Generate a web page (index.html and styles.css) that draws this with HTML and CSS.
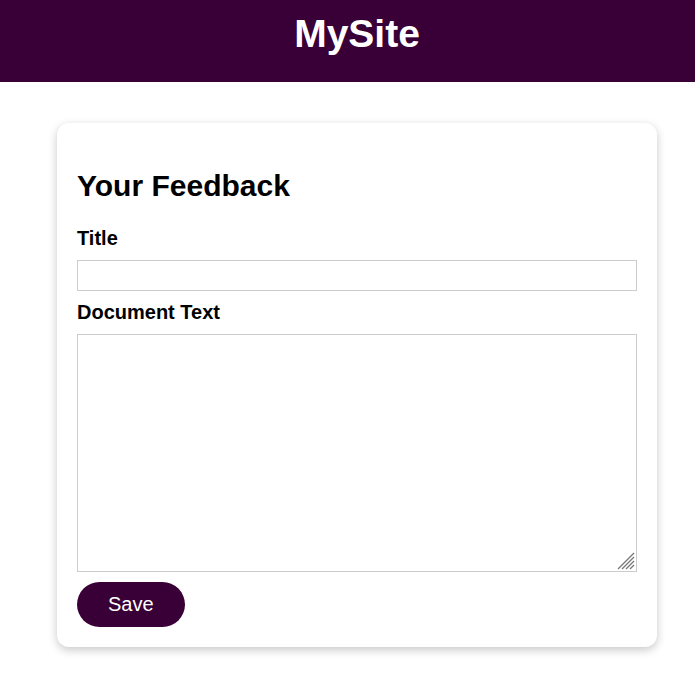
FILE: index.html
```html
<!DOCTYPE html>
<html lang="en">
<head>
<meta charset="utf-8">
<title>MySite</title>
<link rel="stylesheet" href="styles.css">
</head>
<body>
<header class="site-header">
  <h1 class="site-title">MySite</h1>
</header>
<main class="page">
  <form class="card">
    <h2 class="card-title">Your Feedback</h2>
    <label class="field-label" for="title">Title</label>
    <input class="field-input" id="title" type="text">
    <label class="field-label" for="doc">Document Text</label>
    <div class="textarea-wrap">
      <textarea class="field-textarea" id="doc"></textarea>
      <svg class="resize-grip" width="18" height="18" viewBox="0 0 18 18" aria-hidden="true">
        <g stroke="#777777" stroke-width="1.2" fill="none">
          <line x1="1" y1="17" x2="17" y2="1"/>
          <line x1="5" y1="17" x2="17" y2="5"/>
          <line x1="9" y1="17" x2="17" y2="9"/>
          <line x1="13" y1="17" x2="17" y2="13"/>
        </g>
      </svg>
    </div>
    <button class="save-btn" type="button">Save</button>
  </form>
</main>
</body>
</html>
```

FILE: styles.css
```css
* { box-sizing: border-box; }
html, body {
  margin: 0;
  padding: 0;
  background: #ffffff;
  font-family: "Liberation Sans", Arial, sans-serif;
  color: #000;
}
.site-header {
  height: 82px;
  background: #380036;
  padding: 13px 0 0 19px;
  text-align: center;
}
.site-title {
  margin: 0;
  font-size: 39px;
  font-weight: bold;
  color: #ffffff;
  line-height: 42px;
}
.page {
  padding: 41px 0 40px 57px;
}
.card {
  width: 600px;
  background: #fff;
  border-radius: 12px;
  box-shadow: 0 3px 10px rgba(0, 0, 0, 0.22);
  padding: 20px;
  display: flex;
  flex-direction: column;
  align-items: flex-start;
}
.card-title {
  margin: 26px 0 25px;
  font-size: 30px;
  line-height: 33px;
  font-weight: bold;
}
.field-label {
  display: block;
  font-size: 20px;
  font-weight: bold;
  line-height: 22px;
  margin-bottom: 11px;
}
.field-input {
  width: 100%;
  height: 31px;
  border: 1px solid #cccccc;
  border-radius: 0;
  margin: 0 0 10px;
  padding: 4px 6px;
  font-family: inherit;
  font-size: 16px;
}
.textarea-wrap {
  position: relative;
  width: 100%;
  height: 238px;
  margin: 0 0 10px;
}
.field-textarea {
  display: block;
  width: 100%;
  height: 100%;
  border: 1px solid #cccccc;
  border-radius: 0;
  margin: 0;
  padding: 4px 6px;
  font-family: inherit;
  font-size: 16px;
  resize: none;
}
.resize-grip {
  position: absolute;
  right: 2px;
  bottom: 2px;
  pointer-events: none;
}
.save-btn {
  background: #380036;
  color: #ffffff;
  border: none;
  border-radius: 23px;
  font-family: inherit;
  font-size: 20px;
  line-height: 23px;
  padding: 11px 31px;
  cursor: pointer;
}
```
